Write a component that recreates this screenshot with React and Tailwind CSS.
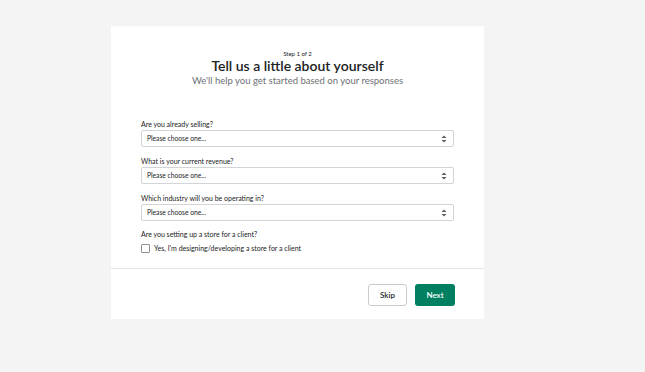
const questions = [
  "Are you already selling?",
  "What is your current revenue?",
  "Which industry will you be operating in?",
];

function SelectField({ label }) {
  return (
    <div className="flex flex-col">
      <label className="text-[7px] leading-[11px] text-[#202223]">{label}</label>
      <div className="flex h-[17px] items-center justify-between rounded-[2px] border border-[#d2d5d8] bg-white pl-[5px] pr-[6px]">
        <span className="text-[6.7px] text-[#202223]">Please choose one...</span>
        <svg width="6" height="8" viewBox="0 0 6 8" className="text-[#5c5f62]">
          <path d="M3 0.5 L5.5 3 H0.5 Z" fill="currentColor" />
          <path d="M3 7.5 L5.5 5 H0.5 Z" fill="currentColor" />
        </svg>
      </div>
    </div>
  );
}

export default function App() {
  return (
    <div
      className="min-h-[372px] bg-[#f4f4f4] pl-[111px] pt-[26px]"
      style={{ fontFamily: '"Segoe UI", Lato, "Noto Sans", sans-serif' }}
    >
      <div className="w-[373px] bg-white">
        <div className="flex flex-col items-center pt-[24px]">
          <div className="text-[6px] leading-[8px] text-[#202223]">Step 1 of 2</div>
          <h1 className="mt-[-1px] text-[14px] font-semibold leading-[17px] text-[#202223]">
            Tell us a little about yourself
          </h1>
          <p className="text-[9.5px] leading-[13px] text-[#6d7175]">
            We'll help you get started based on your responses
          </p>
        </div>

        <div className="flex flex-col gap-[9px] px-[30px] pt-[32px]">
          {questions.map((q) => (
            <SelectField key={q} label={q} />
          ))}
          <div className="-mt-[1px] flex flex-col">
            <div className="text-[7px] leading-[11px] text-[#202223]">
              Are you setting up a store for a client?
            </div>
            <label className="mt-[3px] flex items-center gap-[4px]">
              <span className="h-[9px] w-[9px] rounded-[1px] border border-[#8c9196] bg-white" />
              <span className="text-[7px] leading-[10px] text-[#202223]">
                Yes, I'm designing/developing a store for a client
              </span>
            </label>
          </div>
        </div>

        <div className="mt-[15px] border-t border-[#e1e3e5]" />

        <div className="flex justify-end gap-[8px] px-[29px] pb-[13px] pt-[15px]">
          <button className="h-[22px] w-[39px] rounded-[3px] border border-[#c9cccf] bg-white text-[8px] font-semibold text-[#202223]">
            Skip
          </button>
          <button className="h-[22px] w-[40px] rounded-[3px] bg-[#008060] text-[8px] font-semibold text-white">
            Next
          </button>
        </div>
      </div>
    </div>
  );
}
